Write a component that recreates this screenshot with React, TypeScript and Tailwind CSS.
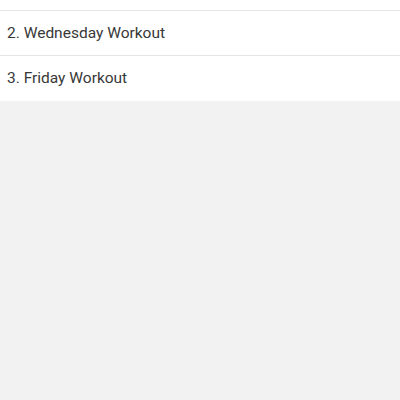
import React from 'react';

const workouts = ['2. Wednesday Workout', '3. Friday Workout'];

const App = () => {
  return (
    <div className="min-h-[400px] bg-[#f2f2f2]" style={{ fontFamily: 'Roboto, sans-serif' }}>
      <div className="bg-white">
        <div className="h-[11px] border-b border-[#e6e6e6]" />
        {workouts.map((w, i) => (
          <div
            key={w}
            className={`h-[45px] flex items-center px-[7px] pt-[1px] text-[15.5px] text-[#383838] ${
              i < workouts.length - 1 ? 'border-b border-[#e6e6e6]' : ''
            }`}
          >
            {w}
          </div>
        ))}
      </div>
    </div>
  );
};

export default App;
